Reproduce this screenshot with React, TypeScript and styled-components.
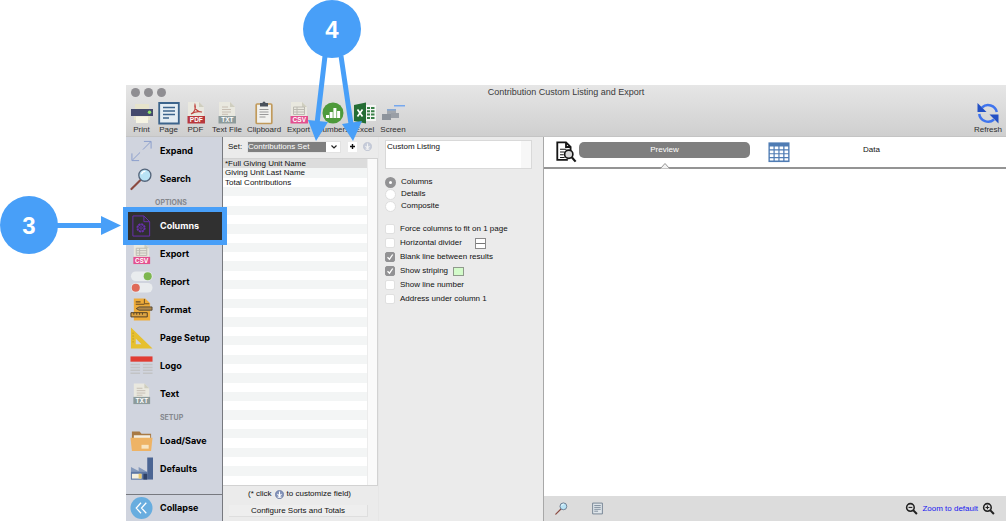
import React from "react";
import styled, { createGlobalStyle } from "styled-components";

const GlobalStyle = createGlobalStyle`
  * { box-sizing: border-box; }
  html, body { margin: 0; background: #fff; }
  body, button, input, select, textarea {
    font-family: "Liberation Sans", Arial, sans-serif;
    font-size: 8px;
    line-height: 10px;
    color: #111;
  }
`;

const Page = styled.main`
  position: relative;
  display: flex;
  min-height: 100vh;
  padding: 85px 1px 1px 126px;
  overflow: hidden;
`;

const Window = styled.section`
  flex: 1;
  min-width: 0;
  display: flex;
  flex-direction: column;
  background: #ebebeb;
`;

const Header = styled.header`
  background: linear-gradient(#e6e6e6, #cfcfcf);
  border-bottom: 1px solid #c4c4c4;
`;

const TitleBar = styled.div`
  display: grid;
  grid-template-columns: 1fr auto 1fr;
  align-items: center;
  height: 14px;
  padding: 0 5px;
`;

const Lights = styled.div`
  display: flex;
  gap: 4px;
`;

const Light = styled.span`
  width: 9px;
  height: 9px;
  border-radius: 50%;
  background: #8f8e92;
`;

const Title = styled.h1`
  margin: 0;
  font-size: 9px;
  font-weight: 400;
  line-height: 14px;
  color: #3a3a3a;
`;

const Toolbar = styled.nav`
  display: flex;
  height: 37px;
  padding: 0 2px;
`;

const Spacer = styled.span`
  flex: 1;
`;

const Tool = styled.button<{ $w: number }>`
  display: flex;
  flex-direction: column;
  align-items: center;
  width: ${(p) => p.$w}px;
  padding: 2px 0 0;
  border: 0;
  background: none;
  color: #2e2e2e;
  white-space: nowrap;
  svg { width: 24px; height: 24px; flex: none; }
`;

const Body = styled.div`
  flex: 1;
  display: grid;
  grid-template-columns: 97px 155px 165px 1fr;
`;

const Sidebar = styled.nav`
  display: flex;
  flex-direction: column;
  background: #d0d4de;
  border-right: 1px solid #77797f;
`;

const NavItem = styled.button<{ $active?: boolean; $h?: number }>`
  display: flex;
  align-items: center;
  gap: 7px;
  height: ${(p) => p.$h ?? 28}px;
  padding: 0 0 0 4px;
  border: 0;
  background: ${(p) => (p.$active ? "#303030" : "none")};
  color: ${(p) => (p.$active ? "#fff" : "#000")};
  font-family: Inter, "Liberation Sans", sans-serif;
  font-size: 9px;
  font-weight: 700;
  line-height: 12px;
  white-space: nowrap;
  svg { width: 23px; height: 24px; flex: none; }
`;

const NavHeading = styled.h2<{ $indent: number }>`
  margin: 0;
  height: 19px;
  padding-left: ${(p) => p.$indent}px;
  font-family: Inter, "Liberation Sans", sans-serif;
  font-size: 7px;
  font-weight: 700;
  line-height: 19px;
  color: #85878d;
`;

const CollapseBar = styled.div`
  display: flex;
  flex-direction: column;
  margin-top: auto;
  border-top: 1px solid #77797f;
`;

const FieldsPane = styled.section`
  display: flex;
  flex-direction: column;
`;

const SetRow = styled.div`
  display: flex;
  align-items: center;
  height: 21px;
  padding: 0 6px 2px 5px;
`;

const SetLabel = styled.label`
  width: 19px;
`;

const SelectWrap = styled.span`
  position: relative;
  display: flex;
  width: 94px;
`;

const SetSelect = styled.select`
  appearance: none;
  width: 100%;
  height: 12px;
  padding: 0;
  border: 1px solid #e2e2e2;
  border-radius: 0;
  background: linear-gradient(to right, #7f7f7f 78px, #fff 78px);
  color: #fff;
`;

const Chevron = styled.svg`
  position: absolute;
  right: 4px;
  top: 4px;
  width: 6px;
  height: 4px;
  pointer-events: none;
`;

const AddButton = styled.button`
  display: flex;
  align-items: center;
  justify-content: center;
  width: 9px;
  height: 10px;
  margin: 0 6px 0 7px;
  padding: 0;
  border: 0;
  background: #fff;
  svg { width: 5px; height: 5px; }
`;

const InfoButton = styled.button<{ $faded?: boolean }>`
  display: inline-flex;
  width: 9px;
  height: 9px;
  padding: 0;
  border: 0;
  background: none;
  opacity: ${(p) => (p.$faded ? 0.35 : 1)};
  svg { width: 9px; height: 9px; }
`;

const ListBox = styled.div`
  flex: 1;
  display: flex;
  border: 1px solid #d2d2d2;
  border-left: 0;
  background: #fafafa;
`;

const List = styled.ul`
  flex: 1;
  display: grid;
  grid-auto-rows: 1fr;
  margin: 0;
  padding: 0;
  list-style: none;
`;

const ListRow = styled.li<{ $selected?: boolean }>`
  min-height: 9px;
  padding-left: 2px;
  line-height: 9px;
  background: #fff;
  &:nth-child(even) { background: #f3f5f5; }
  ${(p) => p.$selected && "&:first-child { background: #dcdcdc; }"}
`;

const ScrollTrack = styled.div`
  width: 10px;
  border-left: 1px solid #ececec;
`;

const FieldsFooter = styled.footer`
  display: flex;
  flex-direction: column;
  align-items: center;
  gap: 6px;
  height: 35px;
  padding: 3px 10px 0 6px;
`;

const Hint = styled.p`
  display: flex;
  align-items: center;
  gap: 3px;
  margin: 0 0 0 2px;
`;

const ConfigureButton = styled.button`
  align-self: stretch;
  height: 12px;
  padding: 0;
  border: 0;
  border-right: 1px solid #dedede;
  border-bottom: 1px solid #dedede;
  background: #eeeeee;
`;

const OptionsPane = styled.section`
  display: flex;
  flex-direction: column;
  padding: 3px 11px 0 6px;
  border-left: 1px solid #e6e6e6;
`;

const TitleField = styled.textarea`
  height: 29px;
  padding: 1px;
  border: 1px solid #d9d9d9;
  border-radius: 0;
  background: linear-gradient(to left, #f7f7f7 10px, #fff 10px);
  resize: none;
  overflow: hidden;
`;

const Group = styled.fieldset<{ $top: number }>`
  display: flex;
  flex-direction: column;
  margin: ${(p) => p.$top}px 0 0;
  padding: 0;
  border: 0;
  min-width: 0;
`;

const Option = styled.label<{ $h: number }>`
  display: flex;
  align-items: center;
  gap: 5px;
  height: ${(p) => p.$h}px;
  white-space: nowrap;
`;

const Radio = styled.input`
  appearance: none;
  width: 11px;
  height: 11px;
  margin: 0;
  border: 1px solid #dedede;
  border-radius: 50%;
  background: #fff;
  &:checked { border: 4px solid #929294; }
`;

const Check = styled.input`
  appearance: none;
  width: 10px;
  height: 10px;
  margin: 0;
  border: 1px solid #e0e0e0;
  border-radius: 2px;
  background: #fff;
  &:checked { border-color: #929294; background: #929294; }
`;

const CheckWrap = styled.span`
  position: relative;
  display: flex;
`;

const Tick = styled.svg`
  position: absolute;
  inset: 0;
  width: 10px;
  height: 10px;
  pointer-events: none;
`;

const DividerSwatch = styled.span`
  display: flex;
  align-items: center;
  width: 11px;
  height: 11px;
  margin-left: 8px;
  border: 1px solid #8a8a8a;
  background: #fff;
  &::after { content: ""; flex: 1; height: 1px; background: #777; }
`;

const ColorSwatch = styled.span`
  width: 11px;
  height: 9px;
  border: 1px solid #8f9a8c;
  background: #d3fbca;
`;

const PreviewPane = styled.section`
  display: flex;
  flex-direction: column;
  min-width: 0;
  background: #fff;
  border-left: 1px solid #a8a8a8;
`;

const Tabs = styled.div`
  display: grid;
  grid-template-columns: 1fr 1fr;
  height: 32px;
  padding: 4px 25px 0 11px;
  border-bottom: 2px solid #949494;
`;

const TabGroup = styled.div<{ $end: number }>`
  display: flex;
  align-items: flex-start;
  gap: 2px;
  min-width: 0;
  padding-right: ${(p) => p.$end}px;
  svg { width: 22px; height: 22px; flex: none; }
`;

const Tab = styled.button<{ $active?: boolean }>`
  position: relative;
  flex: 1;
  height: 16px;
  margin: 1px 0 0;
  padding: 0;
  border: 0;
  border-radius: 5px;
  background: ${(p) => (p.$active ? "#7f7f7f" : "transparent")};
  color: ${(p) => (p.$active ? "#fff" : "#111")};
`;

const Pointer = styled.svg`
  && {
    position: absolute;
    left: calc(50% - 5px);
    top: 20px;
    width: 10px;
    height: 7px;
  }
`;

const PreviewCanvas = styled.div`
  flex: 1;
`;

const PreviewFooter = styled.footer`
  display: flex;
  align-items: center;
  gap: 23px;
  height: 25px;
  padding: 0 11px;
  background: #dcdcdc;
`;

const IconButton = styled.button`
  display: flex;
  padding: 0;
  border: 0;
  background: none;
  svg { width: 13px; height: 13px; }
`;

const ZoomGroup = styled.div`
  display: flex;
  align-items: center;
  gap: 4px;
  margin-left: auto;
`;

const ZoomLink = styled.a`
  color: #1717f0;
  text-decoration: none;
`;

const Annotations = styled.div`
  position: absolute;
  inset: 0;
  pointer-events: none;
`;

const Arrows = styled.svg`
  position: absolute;
  left: 0;
  top: 0;
  width: 400px;
  height: 260px;
`;

const Badge = styled.span<{ $x: number; $y: number }>`
  position: absolute;
  left: ${(p) => p.$x}px;
  top: ${(p) => p.$y}px;
  width: 58px;
  height: 58px;
  border-radius: 50%;
  background: #489ff8;
  color: #fff;
  font-size: 24px;
  font-weight: 700;
  line-height: 60px;
  text-align: center;
`;

const Ico = ({ children }: { children: React.ReactNode }) => (
  <svg viewBox="0 0 24 24" fill="none" aria-hidden="true">{children}</svg>
);

const DocBase = ({ color }: { color: string }) => (
  <>
    <path d="M4 1h11l5 5v11H4z" fill="#e9e8df" />
    <path d="M15 1v5h5z" fill="#cfcebf" />
    <path d="M3.500 15h17.500v7.500H3.500z" fill={color} />
  </>
);

const tag = (s: string) => (
  <text x="12.300" y="21" fontSize="6.500" fontWeight="700" fill="#fff" textAnchor="middle">{s}</text>
);

const PrintIcon = () => (
  <Ico>
    <path d="M5 3h14v6H5zM4 14h16v5H4z" fill="#e6e3cb" />
    <path d="M1 8h22v7H1z" fill="#454a6c" />
    <path d="M6 15.500h12v6.500H6z" fill="#f6f4e4" />
    <circle cx="19.500" cy="11.300" r="1.700" fill="#8fe36a" />
  </Ico>
);
const PageIcon = () => (
  <Ico>
    <path d="M2.200 2h19.600v20.500H2.200z" fill="#e4edf3" stroke="#3c648c" strokeWidth="1.800" />
    <path d="M6 6.500h12M6 10h12M6 13.500h12M6 17h6" stroke="#3c648c" strokeWidth="1.400" />
  </Ico>
);
const PdfIcon = () => (
  <Ico>
    <DocBase color="#b8383d" />
    <path d="M7 13c4-2 5-6 4-9c-1 4 3 7 7 7c-4-1-8 0-11 2" stroke="#c0413d" strokeWidth="1.200" />
    {tag("PDF")}
  </Ico>
);
const TxtIcon = () => (
  <Ico>
    <DocBase color="#8d9b9b" />
    <path d="M7 6h6M7 8.500h9M7 11h9M7 13.300h6" stroke="#c3b9ae" strokeWidth=".9" />
    {tag("TXT")}
  </Ico>
);
const CsvIcon = () => (
  <Ico>
    <DocBase color="#e3508f" />
    <path d="M6.500 6h11v7.500h-11zM6.500 8.500h11M6.500 11h11M10 6v7.500" stroke="#bcbab2" strokeWidth="1" />
    {tag("CSV")}
  </Ico>
);
const ClipboardIcon = () => (
  <Ico>
    <rect x="4.200" y="3" width="15.600" height="19.500" rx="1" fill="#f1f1ee" stroke="#c19a5b" strokeWidth="1.700" />
    <path d="M8 2h2.500a1.500 1.500 0 0 1 3 0H16v3.500H8z" fill="#4a525c" />
    <path d="M7.500 8.500h9M7.500 11h9M7.500 13.500h9M7.500 16h6" stroke="#999" strokeWidth="1" />
  </Ico>
);
const NumbersIcon = () => (
  <Ico>
    <circle cx="12" cy="12" r="10.500" fill="#4e9a3b" />
    <path d="M5 14h3v3H5zM8.700 11h3v6h-3zM12.400 7h3v10h-3zM16.100 10h3v7h-3z" fill="#fff" />
  </Ico>
);
const ExcelIcon = () => (
  <Ico>
    <path d="M12 4h11v16H12z" fill="#f5f7f5" />
    <path d="M14 6h3v2h-3zM18 6h3.500v2H18zM14 9.300h3v2h-3zM18 9.300h3.500v2H18zM14 12.600h3v2h-3zM18 12.600h3.500v2H18zM14 16h3v2h-3zM18 16h3.500v2H18z" fill="#3b8148" />
    <path d="M1 4l12-2.500v21L1 20z" fill="#246d34" />
    <path d="M4.500 8.500l5 7M9.500 8.500l-5 7" stroke="#fff" strokeWidth="1.700" />
  </Ico>
);
const ScreenIcon = () => (
  <Ico>
    <path d="M13 4h11v5H13z" fill="#d9dbe0" />
    <path d="M13 4h11v1.500H13z" fill="#76a8ee" />
    <path d="M6 8h9v7H6z" fill="#a2a7ae" />
    <path d="M6 8h9v1.500H6z" fill="#85a7d3" />
    <path d="M1 13h9v6H1z" fill="#8e949c" />
    <path d="M10 12h8v5h-8z" fill="#9a9fa6" />
  </Ico>
);
const RefreshIcon = () => (
  <Ico>
    <path d="M6 6.500A9 9 0 0 1 20.800 11M18 18.500A9 9 0 0 1 3.200 13" stroke="#3f74ee" strokeWidth="2.500" />
    <path d="M1.500 2v9h9z" fill="#2350c4" />
    <path d="M22.500 22.500v-9h-9z" fill="#2350c4" />
  </Ico>
);

const ExpandIcon = () => (
  <Ico>
    <path d="M2.500 21.500l8-8M13.500 10.500l8-8M2 14.500v7.500h7.500M14.500 2H22v7.500" stroke="#8a9dcc" strokeWidth="1" />
  </Ico>
);
const SearchIcon = () => (
  <Ico>
    <path d="M1.500 22.500L11 13" stroke="#8b4a41" strokeWidth="2.200" strokeLinecap="round" />
    <circle cx="15.500" cy="8" r="6.300" fill="#b9e3f5" stroke="#54657b" strokeWidth="1.400" />
    <path d="M12 7a4 4 0 0 1 4-3" stroke="#fff" strokeWidth="1.400" />
  </Ico>
);
const ColumnsIcon = () => (
  <Ico>
    <path d="M3 1.500h11.500l6 6v15H3zM14.500 1.500v6h6" stroke="#6a2fb0" strokeWidth="1" />
    <circle cx="11.500" cy="14" r="4" stroke="#6a2fb0" strokeWidth="1.600" strokeDasharray="2.200 .9" />
    <circle cx="11.500" cy="14" r="3.300" stroke="#6a2fb0" strokeWidth=".8" />
    <circle cx="11.500" cy="14" r="1.300" stroke="#6a2fb0" strokeWidth=".8" />
  </Ico>
);
const ReportIcon = () => (
  <Ico>
    <rect x="1" y="1" width="22.500" height="10" rx="5" fill="#e9ecee" />
    <circle cx="18.500" cy="6" r="4.200" fill="#7db64f" />
    <rect x="1" y="13" width="22.500" height="10" rx="5" fill="#e9ecee" />
    <circle cx="6" cy="18" r="4.200" fill="#e06a58" />
  </Ico>
);
const FormatIcon = () => (
  <Ico>
    <path d="M4 0h12l5 5v18H4z" fill="#eeac3a" />
    <path d="M6 3.500h5M6 6h9" stroke="#6b4c24" strokeWidth="1.100" />
    <path d="M15 .5v5h5" stroke="#6b4c24" strokeWidth="1" />
    <path d="M6.500 10.500l3-1.700H23v3.400H9.500z" fill="#b2894a" stroke="#4f422e" strokeWidth=".9" />
    <path d="M1 14.800h17v4.400H1z" fill="#dba344" stroke="#4f3d22" strokeWidth="1" />
    <path d="M4 15v2M7 15v2M10 15v2M13 15v2" stroke="#4f3d22" strokeWidth=".9" />
  </Ico>
);
const SetSquareIcon = () => (
  <Ico>
    <path fillRule="evenodd" d="M1 1l22.500 22H1zM6 12.500v6h6z" fill="#e6c02f" />
    <path d="M2.500 7h1.500M2.500 10h1.500M2.500 13h1.500M2.500 16h1.500" stroke="#a98a1d" strokeWidth=".7" />
  </Ico>
);
const LogoIcon = () => (
  <Ico>
    <path d="M.5 2h23v5.500H.5z" fill="#e13c33" />
    <path d="M.5 10.500h10M13.500 10.500h10M.5 13.500h10M13.500 13.500h10M.5 16.500h10M13.500 16.500h10M.5 19.500h10M13.500 19.500h10" stroke="#c2c3c5" strokeWidth="1.600" />
  </Ico>
);
const FolderIcon = () => (
  <Ico>
    <path d="M2 2h8l2 2.500h10V10H2z" fill="#a87a45" />
    <path d="M4 6h17v6H4z" fill="#f4efe2" />
    <path d="M.5 8.500h23L22 22.500H2z" fill="#eeb365" />
    <path d="M12 16h7.500v4H12z" fill="#f8e5c2" />
  </Ico>
);
const FactoryIcon = () => (
  <Ico>
    <path d="M1 10l8 4v-4l9 5v8H1z" fill="#8499bb" />
    <path d="M18 0h6v23h-6z" fill="#4b6593" />
    <path d="M1 15h17v8H1z" fill="#5d77a4" />
    <path d="M2 17h10v5H2z" fill="#f6f1e0" />
    <path d="M9 17h3v5H9z" fill="#e9c86c" />
    <path d="M14 17h4v6h-4z" fill="#2f4268" />
  </Ico>
);
const CollapseIcon = () => (
  <Ico>
    <circle cx="12" cy="12" r="11.500" fill="#68addf" />
    <path d="M11.500 6.500L6.500 12l5 5.500M17 6.500L12 12l5 5.500" stroke="#fff" strokeWidth="1.300" />
  </Ico>
);
const InfoIcon = () => (
  <Ico>
    <circle cx="12" cy="12" r="11" fill="#8494bb" stroke="#596a95" strokeWidth="1.500" />
    <path d="M12 4v9M6.500 11l5.500 5 5.500-5M7 19h10" stroke="#fff" strokeWidth="2.800" />
  </Ico>
);
const DocSearchIcon = () => (
  <Ico>
    <path d="M14 20.500H2.500V1.500H12l5 5v4M12 1.500v5h5" stroke="#161616" strokeWidth="2" />
    <path d="M5.500 9h7M5.500 12h5M5.500 15h4M5.500 18h5" stroke="#161616" strokeWidth="1.300" />
    <circle cx="15" cy="14.500" r="4.500" fill="#d8d8d8" stroke="#161616" strokeWidth="1.800" />
    <path d="M18.500 18l4 4.500" stroke="#161616" strokeWidth="2.400" />
  </Ico>
);
const TableIcon = () => (
  <Ico>
    <path d="M.5 1.500h23v21.500H.5z" fill="#4f7cb4" />
    <path d="M2 6h4v3H2zM7.300 6h4v3h-4zM12.600 6h4v3h-4zM18 6h4v3h-4zM2 10.300h4v3H2zM7.300 10.300h4v3h-4zM12.600 10.300h4v3h-4zM18 10.300h4v3h-4zM2 14.500h4v3H2zM7.300 14.500h4v3h-4zM12.600 14.500h4v3h-4zM18 14.500h4v3h-4zM2 18.700h4v2.500H2zM7.300 18.700h4v2.500h-4zM12.600 18.700h4v2.500h-4zM18 18.700h4v2.500h-4z" fill="#fff" />
  </Ico>
);
const ListingIcon = () => (
  <Ico>
    <path d="M3 2h18v20H3z" fill="#dfe5ea" stroke="#708090" strokeWidth="1.700" />
    <path d="M6 6.500h12M6 10h12M6 13.500h12M6 17h7" stroke="#708090" strokeWidth="1.500" />
  </Ico>
);
const ZoomIcon = ({ plus }: { plus?: boolean }) => (
  <Ico>
    <circle cx="10" cy="10" r="7" stroke="#222" strokeWidth="2.800" />
    <path d="M15 15l7 7" stroke="#222" strokeWidth="3.800" />
    <path d={plus ? "M6.500 10h7M10 6.500v7" : "M6.500 10h7"} stroke="#222" strokeWidth="2" />
  </Ico>
);

const tools: [string, number, React.FC][] = [
  ["Print", 27, PrintIcon],
  ["Page", 27, PageIcon],
  ["PDF", 27, PdfIcon],
  ["Text File", 36, TxtIcon],
  ["Clipboard", 38, ClipboardIcon],
  ["Export", 31, CsvIcon],
  ["Numbers", 38, NumbersIcon],
  ["Excel", 25, ExcelIcon],
  ["Screen", 32, ScreenIcon],
];

type NavEntry = [string, React.FC];
const general: NavEntry[] = [["Expand", ExpandIcon], ["Search", SearchIcon]];
const options: NavEntry[] = [
  ["Columns", ColumnsIcon],
  ["Export", CsvIcon],
  ["Report", ReportIcon],
  ["Format", FormatIcon],
  ["Page Setup", SetSquareIcon],
  ["Logo", LogoIcon],
  ["Text", TxtIcon],
];
const setup: NavEntry[] = [["Load/Save", FolderIcon], ["Defaults", FactoryIcon]];

const NavList = ({ entries }: { entries: NavEntry[] }) => (
  <>
    {entries.map(([name, Icon]) => (
      <NavItem key={name} type="button" $active={name === "Columns"}>
        <Icon />
        {name}
      </NavItem>
    ))}
  </>
);

const fields = ["*Full Giving Unit Name", "Giving Unit Last Name", "Total Contributions"];
const rows = Array.from({ length: 35 }, (_, i) => fields[i] ?? "");

const layouts = ["Columns", "Details", "Composite"];
const flags: [string, boolean, React.ReactNode][] = [
  ["Force columns to fit on 1 page", false, null],
  ["Horizontal divider", false, <DividerSwatch />],
  ["Blank line between results", true, null],
  ["Show striping", true, <ColorSwatch />],
  ["Show line number", false, null],
  ["Address under column 1", false, null],
];

export default function App() {
  return (
    <Page>
      <GlobalStyle />
      <Window>
        <Header>
          <TitleBar>
            <Lights><Light /><Light /><Light /></Lights>
            <Title>Contribution Custom Listing and Export</Title>
          </TitleBar>
          <Toolbar>
            {tools.map(([name, w, Icon]) => (
              <Tool key={name} type="button" $w={w}><Icon />{name}</Tool>
            ))}
            <Spacer />
            <Tool type="button" $w={32}><RefreshIcon />Refresh</Tool>
          </Toolbar>
        </Header>
        <Body>
          <Sidebar>
            <NavList entries={general} />
            <NavHeading $indent={29}>OPTIONS</NavHeading>
            <NavList entries={options} />
            <NavHeading $indent={34}>SETUP</NavHeading>
            <NavList entries={setup} />
            <CollapseBar>
              <NavItem type="button" $h={26}><CollapseIcon />Collapse</NavItem>
            </CollapseBar>
          </Sidebar>
          <FieldsPane>
            <SetRow>
              <SetLabel htmlFor="set">Set:</SetLabel>
              <SelectWrap>
                <SetSelect id="set"><option>Contributions Set</option></SetSelect>
                <Chevron viewBox="0 0 6 4" fill="none"><path d="M.5.5L3 3 5.500.5" stroke="#222" strokeWidth="1.200" /></Chevron>
              </SelectWrap>
              <AddButton type="button" aria-label="Add set">
                <svg viewBox="0 0 5 5"><path d="M2.500 0v5M0 2.500h5" stroke="#111" strokeWidth="1.400" /></svg>
              </AddButton>
              <InfoButton type="button" aria-label="Customize" $faded><InfoIcon /></InfoButton>
            </SetRow>
            <ListBox>
              <List>
                {rows.map((r, i) => <ListRow key={i} $selected={i === 0}>{r}</ListRow>)}
              </List>
              <ScrollTrack />
            </ListBox>
            <FieldsFooter>
              <Hint>(* click <InfoButton type="button" aria-label="Customize field"><InfoIcon /></InfoButton> to customize field)</Hint>
              <ConfigureButton type="button">Configure Sorts and Totals</ConfigureButton>
            </FieldsFooter>
          </FieldsPane>
          <OptionsPane>
            <TitleField aria-label="Listing title" defaultValue="Custom Listing" />
            <Group $top={7}>
              {layouts.map((l) => (
                <Option key={l} $h={12}>
                  <Radio type="radio" name="layout" defaultChecked={l === "Columns"} />
                  {l}
                </Option>
              ))}
            </Group>
            <Group $top={10}>
              {flags.map(([name, on, extra]) => (
                <Option key={name} $h={14}>
                  <CheckWrap>
                    <Check type="checkbox" defaultChecked={on} />
                    {on && <Tick viewBox="0 0 10 10" fill="none"><path d="M2.500 5.200l2 2L7.700 2.500" stroke="#fff" strokeWidth="1.300" /></Tick>}
                  </CheckWrap>
                  {name}
                  {extra}
                </Option>
              ))}
            </Group>
          </OptionsPane>
          <PreviewPane>
            <Tabs>
              <TabGroup $end={18}>
                <DocSearchIcon />
                <Tab type="button" $active>
                  Preview
                  <Pointer viewBox="0 0 10 7"><path d="M.5 6.500L5 1.500l4.500 5" fill="#f3f3f3" stroke="#949494" /></Pointer>
                </Tab>
              </TabGroup>
              <TabGroup $end={30}>
                <TableIcon />
                <Tab type="button">Data</Tab>
              </TabGroup>
            </Tabs>
            <PreviewCanvas />
            <PreviewFooter>
              <IconButton type="button" aria-label="Find"><SearchIcon /></IconButton>
              <IconButton type="button" aria-label="Listing"><ListingIcon /></IconButton>
              <ZoomGroup>
                <IconButton type="button" aria-label="Zoom out"><ZoomIcon /></IconButton>
                <ZoomLink href="#">Zoom to default</ZoomLink>
                <IconButton type="button" aria-label="Zoom in"><ZoomIcon plus /></IconButton>
              </ZoomGroup>
            </PreviewFooter>
          </PreviewPane>
        </Body>
      </Window>
      <Annotations>
        <Arrows viewBox="0 0 400 260" fill="none">
          <rect x="125.500" y="209.500" width="99" height="33" stroke="#489ff8" strokeWidth="5" />
          <path d="M56 225.500h48M325 56l-8 68M341 56l10 68" stroke="#489ff8" strokeWidth="5" />
          <path d="M101 216v19l20-9.500zM308 120l20 2-12 19zM342 124l20-3-9 20z" fill="#489ff8" />
        </Arrows>
        <Badge $x={0} $y={196}>3</Badge>
        <Badge $x={303} $y={0}>4</Badge>
      </Annotations>
    </Page>
  );
}
